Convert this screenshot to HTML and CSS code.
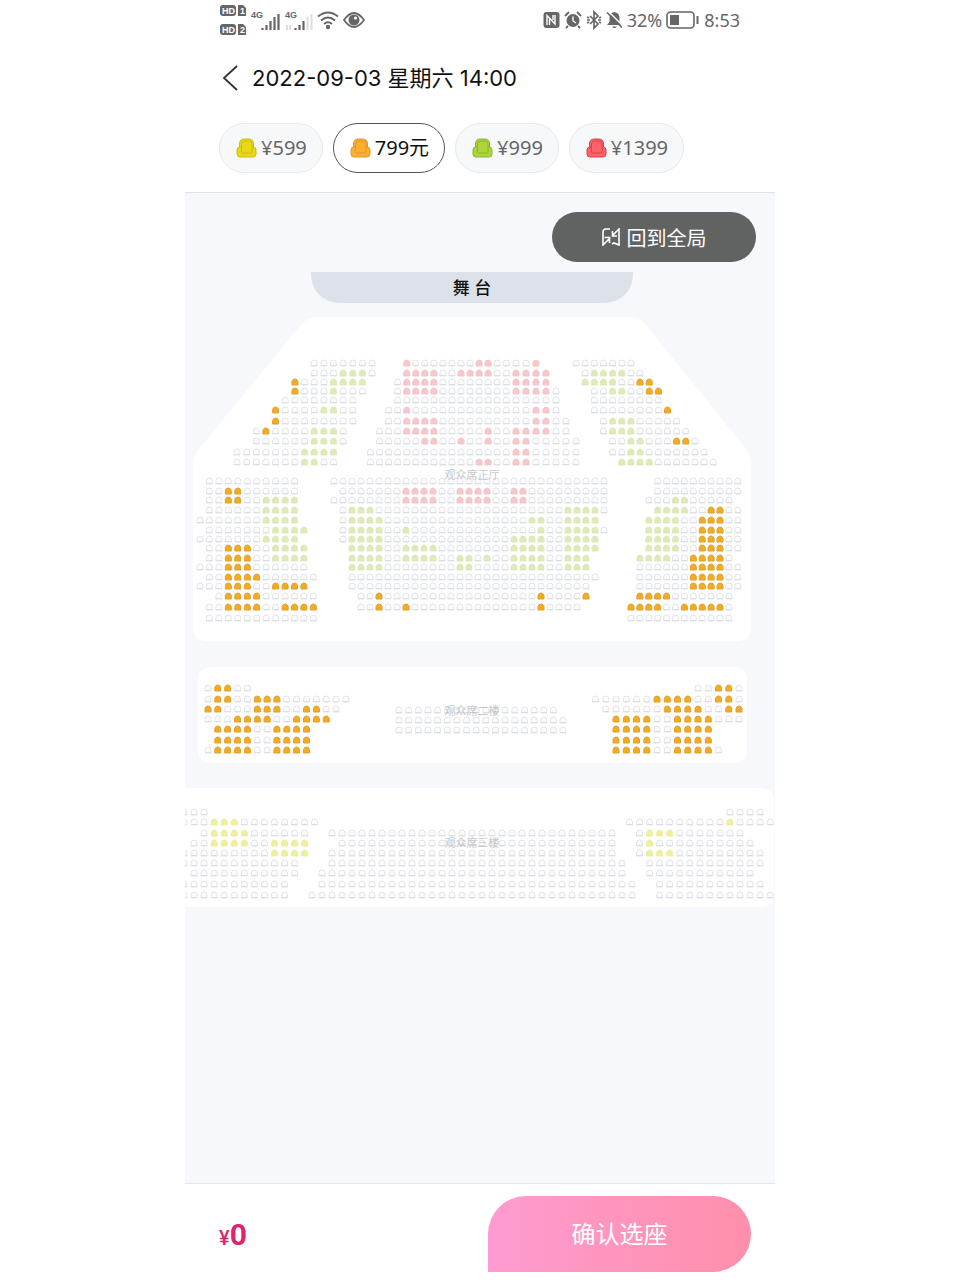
FILE: index.html
```html
<!DOCTYPE html>
<html lang="zh-CN">
<head>
    <meta charset="UTF-8">
    <meta name="viewport" content="width=device-width, initial-scale=1">
    <title>选座</title>
    <link rel="stylesheet" href="styles.css">
</head>
<body>
<div class="phone">
    <div class="status-bar">
        <div class="status-group">
            <svg width="28" height="32" viewBox="0 0 28 32">
                <g fill="#666">
                    <rect x="1" y="1" width="16" height="11" rx="3"/>
                    <path d="M19 1h5l3 3v8h-8z"/>
                    <rect x="1" y="20" width="16" height="11" rx="3"/>
                    <path d="M19 20h5l3 3v8h-8z"/>
                </g>
                <g class="tiny-text" fill="#fff">
                    <text x="3" y="10">HD</text>
                    <text x="21" y="10">1</text>
                    <text x="3" y="29">HD</text>
                    <text x="21" y="29">2</text>
                </g>
            </svg>
            <svg width="30" height="24" viewBox="0 0 30 24">
                <text class="net-text" x="0" y="10" fill="#666">4G</text>
                <path d="M11.500 20v2M15.500 17v5M19.500 13v9M23.500 9v13M27.500 6v16" stroke="#666" stroke-width="2.200"/>
            </svg>
            <svg width="28" height="24" viewBox="0 0 28 24">
                <text class="net-text" x="0" y="10" fill="#666">4G</text>
                <path d="M2 17v5M5 17v5M22.500 9v13M26.500 6v16" stroke="#ddd" stroke-width="2"/>
                <path d="M10.500 20v2M14.500 17v5M18.500 13v9" stroke="#666" stroke-width="2.200"/>
            </svg>
            <svg width="22" height="20" viewBox="0 0 22 20" fill="none" stroke="#666" stroke-width="2">
                <path d="M1 6.500q10-8 20 0M4 10.500q7-6 14 0M7 14q4-3.500 8 0"/>
                <circle cx="11" cy="17" r="1.200" fill="#666"/>
            </svg>
            <svg width="22" height="18" viewBox="0 0 22 18">
                <path d="M1 9q10-14 20 0q-10 14-20 0z" fill="none" stroke="#666" stroke-width="1.800"/>
                <circle cx="11" cy="9" r="5.500" fill="#666"/>
                <circle cx="12.500" cy="7" r="1.600" fill="#fff"/>
            </svg>
        </div>
        <div class="status-group">
            <svg width="17" height="18" viewBox="0 0 17 18">
                <rect x="0.500" y="1" width="16" height="16" rx="3" fill="#666"/>
                <path d="M4 14V4.500l8 8.500V4M6.500 14V8M10 4v5" fill="none" stroke="#fff" stroke-width="1.400"/>
            </svg>
            <svg width="18" height="18" viewBox="0 0 18 18">
                <circle cx="9" cy="9.500" r="6.500" fill="#666"/>
                <path d="M1 5l4-4M17 5l-4-4M4 15l-2 2M14 15l2 2" stroke="#666" stroke-width="1.800"/>
                <path d="M9 5.500V10l3 2" fill="none" stroke="#fff" stroke-width="1.400"/>
            </svg>
            <svg width="16" height="20" viewBox="0 0 16 20">
                <path d="M4 6l8 8-4 4V2l4 4-8 8" fill="none" stroke="#666" stroke-width="1.700"/>
                <path d="M1 7l2 1M1 13l2-1M15 7l-2 1M15 13l-2-1M1 10h3M12 10h3" stroke="#666" stroke-width="1.500"/>
            </svg>
            <svg width="17" height="18" viewBox="0 0 17 18">
                <path d="M8.500 1q5 1 5 6v4l2.500 3h-15l2.500-3V7q0-5 5-6zM6 15.500h5q-2.500 3-5 0z" fill="#666"/>
                <path d="M3 1l14 14" stroke="#fff" stroke-width="1.400"/>
                <path d="M1 1.500l15 15" stroke="#666" stroke-width="1.600"/>
            </svg>
            <span>32%</span>
            <svg width="34" height="18" viewBox="0 0 34 18">
                <rect x="1" y="1" width="27" height="16" rx="3.500" fill="none" stroke="#666" stroke-width="1.600"/>
                <rect x="4" y="4" width="9" height="10" fill="#666"/>
                <path d="M31.500 5v8" stroke="#666" stroke-width="2"/>
            </svg>
            <span class="clock">8:53</span>
        </div>
    </div>

    <header class="top-bar">
        <button class="back" aria-label="返回">
            <svg width="18" height="28" viewBox="0 0 18 28">
                <path d="M16 2L3 14l13 12" fill="none" stroke="#333" stroke-width="1.800"/>
            </svg>
        </button>
        <h1>2022-09-03 星期六 14:00</h1>
    </header>

    <div class="prices">
        <button class="price yellow"><svg class="chair"><use href="#chair"/></svg>¥599</button>
        <button class="price orange active"><svg class="chair"><use href="#chair"/></svg>799元</button>
        <button class="price green"><svg class="chair"><use href="#chair"/></svg>¥999</button>
        <button class="price red"><svg class="chair"><use href="#chair"/></svg>¥1399</button>
    </div>

    <main class="map">
        <button class="reset">
            <svg width="18" height="18" viewBox="0 0 18 18" fill="none" stroke="#fff" stroke-width="1.600">
                <path d="M8 1H4Q1 1 1 4v13l6-6M2.500 9.500H7.500V15M10 16l2-1 5 2V1l-6 6M10.500 3v5H15"/>
            </svg>
            回到全局
        </button>
        <div class="stage">舞 台</div>
        <svg class="halls" viewBox="185 310 590 600">
            <g fill="#fff">
                <path d="M318 317H630Q640 317 646 325L746 449Q751 456 751 464V627Q751 641 737 641H207Q193 641 193 627V464Q193 456 198 450L300 326Q307 317 318 317z"/>
                <rect x="198" y="667" width="549" height="96" rx="12"/>
                <rect x="165" y="788" width="609" height="119" rx="12"/>
            </g>
            <g id="seats"></g>
            <g class="hall-name">
                <text x="472" y="479">观众席正厅</text>
                <text x="472" y="715">观众席二楼</text>
                <text x="472" y="847">观众席三楼</text>
            </g>
        </svg>
    </main>

    <footer class="bottom-bar">
        <div class="total"><span>¥</span>0</div>
        <button class="confirm">确认选座</button>
    </footer>
</div>

<svg class="defs">
    <symbol id="chair" viewBox="0 0 20 20">
        <path d="M3 10V6q0-5 5-5h4q5 0 5 5v4z"/>
        <rect x="0.500" y="9" width="19" height="10" rx="3"/>
        <path d="M5 14V6q0-3 3-3h4.500q3 0 3 3v8q0 1-1 1H6q-1 0-1-1z"/>
    </symbol>
    <symbol id="seat" viewBox="0 0 8 8">
        <path d="M1 7V4q0-3 3-3t3 3v3z"/>
        <path d="M1.500 6.500h5"/>
    </symbol>
    <symbol id="seat-full" viewBox="0 0 8 8">
        <path d="M1 7V3.500Q1.500 1 4 1t3 2.500V7z"/>
    </symbol>
</svg>

<script>
    // a = 799, y = 599, g = 999, r = 1399, o = sold, . = no seat
    const NAMES = { a: 'seat-a', y: 'seat-y', g: 'seat-g', r: 'seat-r', o: 'seat-o' };

    const topY = [363, 373, 382, 391, 400, 410, 421, 431, 441, 452, 462];
    const midY = [481, 491, 500, 510, 520, 530, 539, 548, 558, 567, 577, 586, 596, 607, 618];
    const secondY = [688, 699, 709, 719, 729, 740, 750];
    const thirdY = [812, 822, 833, 843, 853, 863, 873, 884, 895];

    const blocks = [
        { x: 237, step: 9.65, ys: topY, rows: [
            '.8 o7', '.8 o3 g3 o1', '.6 a1 o3 g4', '.6 a1 o3 g1 o3', '.5 o8', '.4 a1 o4 g2 o2',
            '.4 a1 o8', '.2 o1 a1 o4 g3 o1', '.2 o6 g3 o1', 'o7 g4', 'o7 g2 o2'
        ] },
        { x: 370.5, step: 9.05, ys: topY, rows: [
            '.4 r1 o7 r2 o2', '.4 r4 o2 r4 o2', '.3 o1 r4 o8', '.3 o1 r4 o8', '.3 o13', '.2 o2 r1 o11',
            '.2 o2 r4 o8', '.1 o3 r4 o5 r1 o2', '.1 o5 r2 o2 r1 o2 r1 o2', 'o16', 'o12 r2 o2'
        ] },
        { x: 516, step: 10, ys: topY, rows: [
            'o2 r1', 'r4', 'r4', 'r4 o1', 'o5', 'o2 r2 o1', 'o2 r2 o2', 'r4 o2', 'r2 o5', 'r2 o5', 'r2 o5'
        ] },
        { x: 576, step: 9.15, ys: topY, rows: [
            'o7', '.1 o1 g4 o2', '.1 g4 o2 a2', '.2 o2 g2 o2 a2', '.2 o8', '.2 o8 a1',
            '.3 o1 g3 o5', '.3 o1 g3 o6', '.4 o2 g2 o3 a2 o1', '.4 o2 g2 o7', '.5 g4 o7'
        ] },
        { x: 200, step: 9.45, ys: midY, rows: [
            '.1 o10', '.1 o2 a2 o6', '.1 o2 a2 o2 g4', '.1 o6 g4', 'o7 g4', '.1 o7 g4', 'o7 g4',
            '.1 o2 a3 o2 g4', '.1 o2 a3 o2 g4', 'o3 a3 o6', '.1 o2 a4 o6', 'o3 a3 o2 a4',
            '.2 o1 a4 o6', '.1 o2 a4 o2 a4', '.1 o12'
        ] },
        { x: 334, step: 9, ys: midY, rows: [
            'o31', '.1 o7 r4 o2 r4 o2 r2 o9', 'o8 r4 o2 r4 o2 r2 o9', '.1 o1 g3 o21 g4 o1',
            '.1 o1 g4 o16 g2 o2 g4', '.1 o1 g4 o2 g1 o14 g1 o2 g4 o1', '.1 o1 g4 o14 g4 o2 g4',
            '.2 g4 o2 g4 o8 g4 o2 g4', '.2 g4 o2 g4 o2 g2 o1 g1 o2 g4 o2 g3', '.2 g4 o8 g2 o4 g4 o2 g3',
            '.2 o28', '.2 o27', '.3 o2 a1 o17 a1 o4 a1', '.3 o2 a1 o2 a1 o14 a1 o4'
        ] },
        { x: 631, step: 8.9, ys: midY, rows: [
            '.3 o10', '.3 o10', '.2 o3 g2 o5', '.3 g4 o2 a2 o2', '.2 g4 o2 a3 o2', '.2 g4 o2 a3 o2',
            '.2 g4 o2 a3 o2', '.2 g4 o2 a3 o2', '.1 g4 o2 a4 o1', '.1 o6 a4 o2', '.1 o6 a4 o2',
            '.1 o6 a4 o2', '.1 a4 o7', 'a4 o2 a5 o1', 'o12'
        ] },
        { x: 208, step: 9.85, ys: secondY, rows: [
            'o1 a2 o2', 'o1 a2 o2 a3 o7', 'a2 o3 a3 o2 a2 o2', 'o3 a4 o2 a4',
            '.1 a4 o2 a4', '.1 a4 o2 a4', 'o1 a4 o2 a4'
        ] },
        { x: 399, step: 9.65, ys: [710, 720, 730], rows: ['o17', 'o18', 'o18'] },
        { x: 595.5, step: 10.25, ys: secondY, rows: [
            '.10 o2 a2 o1', 'o6 a4 o2 a2 o1', '.1 o6 a4 o2 a2', '.2 a4 o2 a4 o3',
            '.2 a4 o2 a4', '.2 a4 o2 a4', '.2 a4 o2 a4 o1'
        ] },
        { x: 184, step: 10.05, ys: thirdY, rows: [
            'o3', 'o3 y3 o8', '.2 o1 y4 o6', '.1 o2 y4 o2 y4', 'o9 y4', 'o12', '.1 o11', 'o11', 'o11'
        ] },
        { x: 312, step: 10, ys: thirdY.slice(2), rows: [
            '.2 o29', '.3 o28', '.2 o29', '.2 o30', '.1 o31', '.1 o32', 'o33'
        ] },
        { x: 629.5, step: 10.05, ys: thirdY, rows: [
            '.10 o4', 'o10 y1 o4', '.1 o1 y3 o7', '.1 o1 y1 o10', '.1 o1 y3 o9', '.2 o12', '.2 o11', '.3 o11', '.3 o12'
        ] }
    ];

    function drawSeats() {
        let html = '';
        blocks.forEach(block => {
            block.rows.forEach((row, i) => {
                let col = 0;
                row.split(' ').forEach(run => {
                    const type = run[0];
                    const count = parseInt(run.slice(1));
                    const shape = type === 'o' ? 'seat' : 'seat-full';
                    for (let n = 0; n < count; n++, col++) {
                        if (type === '.') continue;
                        const x = (block.x + col * block.step - 4).toFixed(1);
                        html += `<use href="#${shape}" class="${NAMES[type]}" x="${x}" y="${block.ys[i] - 4}" width="8" height="8"/>`;
                    }
                });
            });
        });
        document.getElementById('seats').innerHTML = html;
    }

    drawSeats();
</script>
</body>
</html>
```

FILE: styles.css
```css
* {
    box-sizing: border-box;
}
body {
    margin: 0;
    background: #fff;
    font-family: "Noto Sans", "Noto Sans CJK SC", sans-serif;
    color: #111;
}
button {
    font: inherit;
    border: none;
    padding: 0;
    cursor: pointer;
}
.phone {
    max-width: 590px;
    min-height: 100vh;
    margin: 0 auto;
    display: flex;
    flex-direction: column;
}
.status-bar {
    display: flex;
    justify-content: space-between;
    align-items: center;
    height: 40px;
    padding: 0 35px 0 34px;
    color: #666;
    font-size: 18px;
}
.status-group {
    display: flex;
    align-items: center;
    gap: 4px;
}
.tiny-text {
    font: bold 9px "Liberation Sans", sans-serif;
}
.net-text {
    font: bold 9px "Liberation Sans", sans-serif;
}
.top-bar {
    display: flex;
    align-items: center;
    gap: 13px;
    height: 76px;
    padding: 0 36px;
}
.back {
    display: flex;
    background: none;
}
h1 {
    margin: 0;
    font-family: Inter, "Noto Sans CJK SC", sans-serif;
    font-size: 22px;
    font-weight: 400;
    line-height: 30px;
}
.prices {
    display: flex;
    gap: 10px;
    padding: 7px 34px 19px;
    border-bottom: 1px solid #dde2e7;
}
.price {
    display: flex;
    align-items: center;
    gap: 4px;
    height: 50px;
    padding: 0 15px 0 16px;
    border: 1px solid #e6eaed;
    border-radius: 25px;
    background: #f6f8fa;
    color: #666;
    font-size: 20px;
    line-height: 28px;
}
.price.active {
    background: #fff;
    border-color: #555;
    color: #111;
}
.chair {
    width: 21px;
    height: 20px;
    stroke: var(--line);
    fill: var(--fill);
}
.yellow {
    --fill: #e8d815;
    --line: #cdbc0c;
}
.orange {
    --fill: #fcae30;
    --line: #e3962a;
}
.green {
    --fill: #add63c;
    --line: #8ab432;
}
.red {
    --fill: #ff6268;
    --line: #d8444a;
}
.map {
    flex: 1;
    display: flex;
    flex-direction: column;
    align-items: center;
    padding-top: 19px;
    background: #f6f8fb;
}
.reset {
    display: flex;
    align-items: center;
    justify-content: center;
    gap: 7px;
    align-self: flex-end;
    width: 204px;
    height: 50px;
    margin-right: 19px;
    border-radius: 25px;
    background: #616362;
    color: #fff;
    font-size: 20px;
}
.stage {
    width: 322px;
    max-width: 80%;
    height: 31px;
    margin: 10px 16px 0 0;
    border-radius: 0 0 28px 28px;
    background: #dde1e9;
    font-size: 17px;
    font-weight: 500;
    line-height: 31px;
    text-align: center;
}
.halls {
    display: block;
    width: 100%;
    margin-top: 7px;
}
.hall-name {
    fill: #bbb;
    font-size: 11px;
    text-anchor: middle;
    opacity: 0.8;
}
.seat-o {
    fill: #fcfcfd;
    stroke: #cfd3da;
    stroke-width: 0.6px;
}
.seat-a {
    fill: #f2ab22;
    stroke: #e0a02c;
    stroke-width: 1px;
}
.seat-g {
    fill: #deeab8;
    stroke: #dbe6b4;
    stroke-width: 0.8px;
}
.seat-r {
    fill: #f7c8cb;
    stroke: #f2bcc0;
    stroke-width: 0.8px;
}
.seat-y {
    fill: #f0f09c;
    stroke: #ebeb98;
    stroke-width: 0.8px;
}
.bottom-bar {
    display: flex;
    justify-content: space-between;
    align-items: center;
    height: 97px;
    padding: 4px 24px 0 34px;
    border-top: 1px solid #e3e7eb;
}
.total {
    color: #dc2470;
    font-family: Roboto, sans-serif;
    font-size: 30px;
    font-weight: 700;
}
.total span {
    font-size: 20px;
    font-weight: 500;
}
.confirm {
    width: 263px;
    height: 76px;
    padding-bottom: 4px;
    border-radius: 38px 38px 38px 0;
    background: linear-gradient(90deg, #fe9bd0, #ff8fab);
    color: #fff;
    font-size: 24px;
}
.defs {
    position: absolute;
    width: 0;
    height: 0;
}
```
